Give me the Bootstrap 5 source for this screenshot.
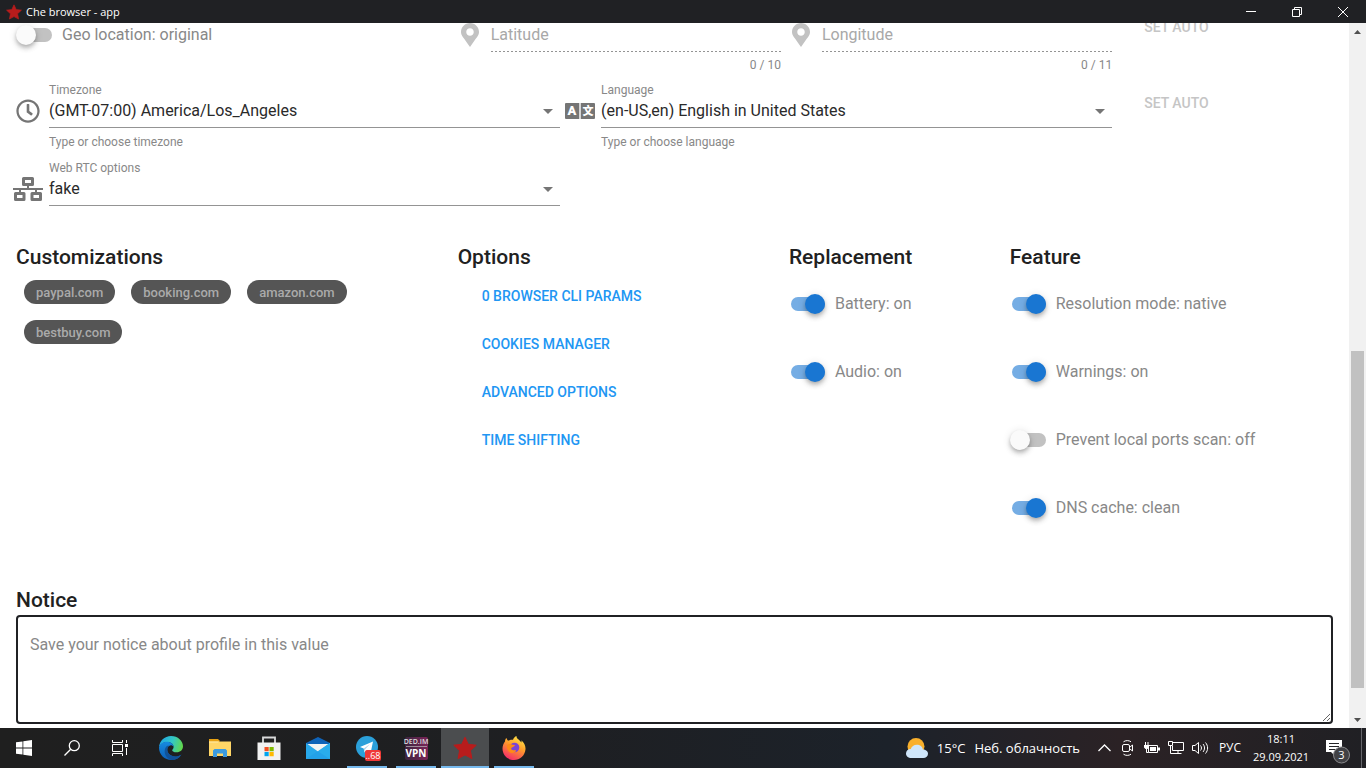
<!DOCTYPE html>
<html lang="en">
<head>
    <meta charset="UTF-8">
    <meta name="viewport" content="width=device-width, initial-scale=1.0">
    <title>Che browser - app</title>
    <link href="https://cdn.jsdelivr.net/npm/bootstrap@5.3.0/dist/css/bootstrap.min.css" rel="stylesheet">
    <style>
        :root {
            --text: #2a2a2a;
            --heading: #212121;
            --muted: #888;
            --faded: #a8a8a8;
            --blue: #1976d2;
            --link: #2196f3;
        }

        body {
            font-family: Roboto, "Liberation Sans", sans-serif;
            font-size: 16px;
            line-height: 24px;
            color: var(--text);
            background: #fff;
        }

        /* window title bar */
        .titlebar {
            height: 23px;
            padding-left: 6px;
            background: #202124;
            color: #fff;
            font: 11px/22px "Open Sans", "Noto Sans", sans-serif;
        }
        .titlebar .win-btn {
            width: 46px;
            height: 23px;
        }
        .plain-btn {
            border: 0;
            padding: 0;
            background: none;
            color: inherit;
            display: flex;
            align-items: center;
            justify-content: center;
        }
        svg { display: block; flex: none; overflow: visible; }

        /* page is scrolled a little past the first row */
        .profile-form { margin-top: -16px; }

        .field-row { margin-bottom: 12px; }
        .field-row.first { margin-bottom: 11px; }
        .field-icon {
            width: 24px;
            height: 24px;
            margin: 16px 9px 0 0;
            color: #757575;
        }
        .field-icon.off { color: #c2c2c2; }
        .field-label {
            display: block;
            height: 14px;
            font-size: 12px;
            line-height: 14px;
            color: var(--muted);
        }
        .field-line {
            height: 31px;
            border-bottom: 1px solid #949494;
        }
        .field-line.dotted {
            border-bottom: 0;
            background: repeating-linear-gradient(90deg, #949494 0 2px, transparent 2px 4px) bottom / 100% 1px no-repeat;
        }
        .field-line select,
        .field-line input {
            flex: 1 1 auto;
            min-width: 0;
            height: 28px;
            border: 0;
            padding: 0;
            background: none;
            color: var(--text);
            appearance: none;
            outline: 0;
        }
        .field-line input { height: 26px; }
        .field-line input::placeholder { color: var(--faded); opacity: 1; }
        .field-hint, .field-count {
            font-size: 12px;
            line-height: 14px;
            color: var(--muted);
        }
        .field-hint { margin-top: 7px; }
        .field-count { margin-top: 6px; text-align: right; }

        .text-btn {
            height: 36px;
            padding: 0 16px;
            margin: 6px 8px;
            border: 0;
            background: none;
            font-size: 14px;
            font-weight: 500;
            color: var(--link);
            text-align: left;
        }
        .text-btn:disabled { color: #c5c5c5; margin-top: 2px; }

        .section-title {
            margin: 0;
            font-size: 21px;
            font-weight: 500;
            line-height: 30px;
            color: var(--heading);
        }
        .customs { margin-top: 36px; }
        .chip {
            height: 24px;
            margin: 8px;
            padding: 0 12px;
            border: 0;
            border-radius: 12px;
            background: #555;
            color: #aaa;
            font-size: 13px;
            font-weight: 500;
            line-height: 25px;
        }

        /* switches */
        .switch-row {
            display: flex;
            align-items: center;
            height: 68px;
            padding-bottom: 4px;
            color: var(--muted);
        }
        .switch-row.first { height: 60px; }
        .switch-input {
            appearance: none;
            display: flex;
            align-items: center;
            width: 34px;
            height: 14px;
            margin: 0 10px 0 2px;
            border-radius: 7px;
            background: #c2c2c2;
        }
        .switch-input::before {
            content: "";
            flex: none;
            width: 20px;
            height: 20px;
            margin-left: -2px;
            border-radius: 50%;
            background: #fafafa;
            box-shadow: 0 2px 4px -1px rgba(0, 0, 0, .2), 0 4px 5px rgba(0, 0, 0, .14), 0 1px 8px rgba(0, 0, 0, .12);
        }
        .switch-input:checked { background: #75ade4; }
        .switch-input:checked::before { margin-left: 14px; background: var(--blue); }

        .notice { margin-top: 41px; }
        .notice textarea {
            display: block;
            width: 100%;
            height: 109px;
            padding: 16px 12px;
            border: 2px solid #202124;
            border-radius: 4px;
            outline: 0;
        }
        .notice textarea::placeholder { color: var(--muted); opacity: 1; }

        .scrollbar { width: 17px; background: #f1f1f1; }
        .scrollbar .plain-btn { height: 17px; width: 17px; }
        .scrollbar .thumb { width: 13px; background: #c1c1c1; flex: 337 1 0; }
        .scrollbar .before { flex: 311 1 0; }
        .scrollbar .after { flex: 23 1 0; }

        /* taskbar */
        .taskbar {
            height: 40px;
            background: linear-gradient(90deg, #1f1f1f, #1e1f22 40%, #1c222a 65%, #2b2225 82%, #202024);
            color: #fff;
            font: 12px/18px "Open Sans", "Noto Sans", sans-serif;
        }
        .task { width: 48px; height: 40px; }
        .apps { gap: 1px; margin-left: 3px; }
        .running {
            border-bottom: 2px solid #76b9ed;
            width: 40px;
            margin: 0 4px;
            padding-top: 2px;
        }
        .running.current { width: 48px; margin: 0; background: #4b4d4f; }
        .tray { width: 24px; height: 40px; }
        .weather { gap: 9px; padding-right: 12px; font-size: 13px; }
        .lang { width: 36px; height: 40px; }
        .clock { width: 66px; font-size: 11px; }
        .notes {
            width: 48px;
            height: 40px;
            padding-top: 6px;
            border-right: 1px solid #65656a;
            margin-right: 4px;
        }
    </style>
</head>
<body class="vh-100 d-flex flex-column overflow-hidden">
    <svg width="0" height="0" class="position-absolute" aria-hidden="true">
        <defs>
            <symbol id="star" viewBox="0 0 24 24">
                <path d="M12 1.200l3.300 7.100 7.900 .9-5.800 5.500 1.500 7.900L12 18.900l-6.900 3.700 1.500-7.900L.8 9.200l7.900-.9z" fill="#b71c1c" stroke="#b71c1c" stroke-linejoin="round"/>
            </symbol>
            <symbol id="pin" viewBox="0 0 384 512">
                <path fill="currentColor" d="M192 512C50 300 0 269 0 192 0 86 86 0 192 0s192 86 192 192c0 77-50 108-192 320zm0-240c44 0 80-36 80-80s-36-80-80-80-80 36-80 80 36 80 80 80z"/>
            </symbol>
            <symbol id="caret" viewBox="0 0 24 24">
                <path d="M7 10l5 5 5-5z" fill="#757575"/>
            </symbol>
        </defs>
    </svg>

    <header class="titlebar d-flex flex-shrink-0 align-items-center">
        <svg width="16" height="16"><use href="#star"/></svg>
        <span class="ps-1">Che browser - app</span>
        <div class="d-flex ms-auto">
            <button class="plain-btn win-btn" aria-label="Minimize">
                <svg width="10" height="10"><path d="M0 4.500h10" stroke="#fff"/></svg>
            </button>
            <button class="plain-btn win-btn" aria-label="Restore">
                <svg width="10" height="10"><path d="M.5 2.500h7v7h-7zM2.500 2.500v-2h7v7h-2" fill="none" stroke="#fff"/></svg>
            </button>
            <button class="plain-btn win-btn" aria-label="Close">
                <svg width="10" height="10"><path d="M0 0l10 10M10 0L0 10" stroke="#fff"/></svg>
            </button>
        </div>
    </header>

    <main class="d-flex flex-grow-1 overflow-hidden">
        <form class="profile-form container-fluid px-3">
            <div class="row gx-2 field-row first">
                <div class="col-4">
                    <div class="switch-row first">
                        <input class="switch-input" type="checkbox" role="switch" id="geo">
                        <label for="geo">Geo location: original</label>
                    </div>
                </div>
                <div class="col-3 d-flex">
                    <div class="field-icon off d-flex justify-content-center"><svg width="18" height="24"><use href="#pin"/></svg></div>
                    <div class="flex-grow-1">
                        <span class="field-label"></span>
                        <div class="field-line dotted d-flex"><input type="text" placeholder="Latitude" aria-label="Latitude" disabled></div>
                        <div class="field-count">0 / 10</div>
                    </div>
                </div>
                <div class="col-3 d-flex">
                    <div class="field-icon off d-flex justify-content-center"><svg width="18" height="24"><use href="#pin"/></svg></div>
                    <div class="flex-grow-1">
                        <span class="field-label"></span>
                        <div class="field-line dotted d-flex"><input type="text" placeholder="Longitude" aria-label="Longitude" disabled></div>
                        <div class="field-count">0 / 11</div>
                    </div>
                </div>
                <div class="col-2"><button type="button" class="text-btn" disabled>SET AUTO</button></div>
            </div>

            <div class="row gx-2 field-row">
                <div class="col-5 d-flex">
                    <div class="field-icon">
                        <svg width="24" height="24" viewBox="0 0 512 512"><path fill="currentColor" d="M256 8C119 8 8 119 8 256s111 248 248 248 248-111 248-248S393 8 256 8zm0 448c-110 0-200-90-200-200S146 56 256 56s200 90 200 200-90 200-200 200zm62-104l-85-62c-3-2-5-6-5-10V116c0-7 5-12 12-12h32c7 0 12 5 12 12v142l67 48c5 4 6 12 2 17l-18 26c-4 5-12 6-17 3z"/></svg>
                    </div>
                    <div class="flex-grow-1">
                        <label class="field-label" for="timezone">Timezone</label>
                        <div class="field-line d-flex align-items-start">
                            <select id="timezone"><option>(GMT-07:00) America/Los_Angeles</option></select>
                            <svg width="24" height="28"><use href="#caret"/></svg>
                        </div>
                        <div class="field-hint">Type or choose timezone</div>
                    </div>
                </div>
                <div class="col-5 d-flex">
                    <div class="field-icon d-flex justify-content-center">
                        <svg width="30" height="24" viewBox="0 0 30 24">
                            <path d="M1 4h13.300v16H1a1 1 0 0 1-1-1V5a1 1 0 0 1 1-1zM15.700 4H29a1 1 0 0 1 1 1v14a1 1 0 0 1-1 1H15.700z" fill="currentColor"/>
                            <text x="7" y="16" text-anchor="middle" font-family="Roboto" font-size="13" font-weight="900" fill="#fff">A</text>
                            <text x="23" y="16" text-anchor="middle" font-family="Noto Sans CJK SC" font-size="11" font-weight="900" fill="#fff">文</text>
                        </svg>
                    </div>
                    <div class="flex-grow-1">
                        <label class="field-label" for="language">Language</label>
                        <div class="field-line d-flex align-items-start">
                            <select id="language"><option>(en-US,en) English in United States</option></select>
                            <svg width="24" height="28"><use href="#caret"/></svg>
                        </div>
                        <div class="field-hint">Type or choose language</div>
                    </div>
                </div>
                <div class="col-2"><button type="button" class="text-btn" disabled>SET AUTO</button></div>
            </div>

            <div class="row gx-2">
                <div class="col-5 d-flex">
                    <div class="field-icon d-flex justify-content-center">
                        <svg width="30" height="24" viewBox="0 0 30 24">
                            <path d="M10.500 1.500h9v6h-9zM2.500 16.500h8.500v6H2.500zM19 16.500h8.500v6H19z" fill="none" stroke="currentColor" stroke-width="3" stroke-linejoin="round"/>
                            <path d="M0 12h30M15 8v4M7 12v4M23 12v4" stroke="currentColor" stroke-width="2"/>
                        </svg>
                    </div>
                    <div class="flex-grow-1">
                        <label class="field-label" for="webrtc">Web RTC options</label>
                        <div class="field-line d-flex align-items-start">
                            <select id="webrtc"><option>fake</option></select>
                            <svg width="24" height="28"><use href="#caret"/></svg>
                        </div>
                    </div>
                </div>
            </div>

            <div class="row gx-2 customs">
                <section class="col-4">
                    <h2 class="section-title">Customizations</h2>
                    <div class="d-flex flex-wrap">
                        <button type="button" class="chip">paypal.com</button>
                        <button type="button" class="chip">booking.com</button>
                        <button type="button" class="chip">amazon.com</button>
                        <button type="button" class="chip">bestbuy.com</button>
                    </div>
                </section>
                <section class="col-3">
                    <h2 class="section-title">Options</h2>
                    <div class="d-flex flex-column align-items-start">
                        <button type="button" class="text-btn">0 BROWSER CLI PARAMS</button>
                        <button type="button" class="text-btn">COOKIES MANAGER</button>
                        <button type="button" class="text-btn">ADVANCED OPTIONS</button>
                        <button type="button" class="text-btn">TIME SHIFTING</button>
                    </div>
                </section>
                <section class="col-2">
                    <h2 class="section-title">Replacement</h2>
                    <div class="switch-row">
                        <input class="switch-input" type="checkbox" role="switch" id="battery" checked>
                        <label for="battery">Battery: on</label>
                    </div>
                    <div class="switch-row">
                        <input class="switch-input" type="checkbox" role="switch" id="audio" checked>
                        <label for="audio">Audio: on</label>
                    </div>
                </section>
                <section class="col-3">
                    <h2 class="section-title">Feature</h2>
                    <div class="switch-row">
                        <input class="switch-input" type="checkbox" role="switch" id="resolution" checked>
                        <label for="resolution">Resolution mode: native</label>
                    </div>
                    <div class="switch-row">
                        <input class="switch-input" type="checkbox" role="switch" id="warnings" checked>
                        <label for="warnings">Warnings: on</label>
                    </div>
                    <div class="switch-row">
                        <input class="switch-input" type="checkbox" role="switch" id="ports">
                        <label for="ports">Prevent local ports scan: off</label>
                    </div>
                    <div class="switch-row">
                        <input class="switch-input" type="checkbox" role="switch" id="dns" checked>
                        <label for="dns">DNS cache: clean</label>
                    </div>
                </section>
            </div>

            <div class="notice">
                <h2 class="section-title"><label for="notice">Notice</label></h2>
                <textarea id="notice" placeholder="Save your notice about profile in this value"></textarea>
            </div>
        </form>

        <div class="scrollbar d-flex flex-column align-items-center flex-shrink-0">
            <button class="plain-btn" aria-label="Scroll up"><svg width="7" height="4"><path d="M0 4l3.500-4L7 4z" fill="#505050"/></svg></button>
            <div class="before"></div>
            <div class="thumb"></div>
            <div class="after"></div>
            <button class="plain-btn" aria-label="Scroll down"><svg width="7" height="4"><path d="M0 0l3.500 4L7 0z" fill="#505050"/></svg></button>
        </div>
    </main>

    <footer class="taskbar d-flex flex-shrink-0 align-items-center">
        <button class="plain-btn task" aria-label="Start">
            <svg width="16" height="16"><path d="M0 2.300l6.500-.9v6.100H0zM7.300 1.300L16 0v7.500H7.300zM0 8.400h6.500v6.200L0 13.700zM7.300 8.400H16V16l-8.700-1.300z" fill="#fff"/></svg>
        </button>
        <button class="plain-btn task" aria-label="Search">
            <svg width="16" height="16" fill="none" stroke="#fff" stroke-width="1.300"><circle cx="10.300" cy="5.700" r="5"/><path d="M6.700 9.300L.5 15.500"/></svg>
        </button>
        <button class="plain-btn task" aria-label="Task view">
            <svg width="16" height="16" fill="none" stroke="#fff"><path d="M.5 0v2.500h10V0M.5 16v-2.500h10V16M.5 4.500h10v7H.5zM14.500 0v3M14.500 8v7"/><path d="M13 4h3v3h-3z" fill="#fff" stroke="none"/></svg>
        </button>
        <div class="d-flex apps">
            <button class="plain-btn task" aria-label="Edge">
                <svg width="24" height="24" viewBox="0 0 24 24">
                    <defs>
                        <linearGradient id="e1" x1="0" y1=".3" x2="1" y2=".5"><stop stop-color="#1fa5e8"/><stop offset=".55" stop-color="#34c8c4"/><stop offset="1" stop-color="#62d84c"/></linearGradient>
                        <linearGradient id="e2" x1="0" y1="0" x2="0" y2="1"><stop stop-color="#168be0"/><stop offset="1" stop-color="#0d5fb8"/></linearGradient>
                    </defs>
                    <path d="M0 11.500C.3 5 5.500 0 12 0c7 0 12 5 12 10.300 0 3.700-2.800 6-6.300 6-3.400 0-4.500-1.300-4.500-2.100s1.400-1.400 1.400-3.300C14.600 8 11.600 6 8.200 6 4 6 1 8.500 0 11.500z" fill="url(#e1)"/>
                    <path d="M0 11.500C1 8 4 5.800 8 5.800c3.700 0 6.400 2.200 6.600 5-.8-1-2-1.600-3.200-1.400-2.500.4-3.600 3.200-2.800 5.900 1 3.500 4.600 5.500 8.600 5.100 2.200-.2 4-1.100 5.200-2-2 3.700-5.800 5.600-9.900 5.600C5.400 24 0 18.700 0 11.500z" fill="url(#e2)"/>
                    <path d="M8.200 9.800c-1.900 1.400-3 4-2.400 7.100.7 3.600 3.300 6.300 6.700 7 4.200 0 7.900-2 9.900-5.500-1.200.9-3 1.800-5.200 2-4 .4-7.600-1.600-8.600-5.100-.6-2.200 0-4.500 1.700-5.500z" fill="#114a8b" opacity=".75"/>
                </svg>
            </button>
            <button class="plain-btn task" aria-label="File Explorer">
                <svg width="22" height="18" viewBox="0 0 22 18">
                    <path d="M0 0h9l1.500 1.500V4H0z" fill="#e8a213"/><path d="M0 2.500h22V17H0z" fill="#ffd667"/><path d="M0 2.500h10l-1 1H0z" fill="#ffe9a8"/>
                    <path d="M4 18v-6.500L5.500 10h11l1.500 1.500V18h-4v-3.500H8V18z" fill="#3c9be0"/>
                </svg>
            </button>
            <button class="plain-btn task" aria-label="Microsoft Store">
                <svg width="24" height="24" viewBox="0 0 24 24">
                    <path d="M6 7V1.500h12V7" fill="none" stroke="#d9dadb" stroke-width="1.800"/><path d="M.5 6.500h23V24H.5z" fill="#f2f2f2"/>
                    <path d="M7.500 11h4.200v4.200H7.500z" fill="#f25022"/><path d="M12.500 11h4.200v4.200h-4.200z" fill="#7fba00"/><path d="M7.500 16h4.200v4.200H7.500z" fill="#00a4ef"/><path d="M12.500 16h4.200v4.200h-4.200z" fill="#ffb900"/>
                </svg>
            </button>
            <button class="plain-btn task" aria-label="Mail">
                <svg width="24" height="22" viewBox="0 0 24 22">
                    <path d="M0 6l12-6 12 6v5H0z" fill="#0f63b8"/><path d="M1 7h22L12 16z" fill="#f3f3f3"/>
                    <path d="M0 6l12 8.500L24 6v16H0z" fill="#28a8ea"/><path d="M12 14.500L24 6v16z" fill="#35c1f1"/><path d="M0 22L24 6v16z" fill="#1f9be6" opacity=".55"/>
                </svg>
            </button>
            <button class="plain-btn task running" aria-label="Telegram">
                <svg width="22" height="24" viewBox="0 0 22 24">
                    <circle cx="11" cy="11" r="11" fill="#2ba0da"/><path d="M4 11l13-5.500-2.500 12-4-3-2 2-.8-4z" fill="#fff"/><path d="M7.800 12.500L14 8l-5 5.500-.4 3z" fill="#b3d5ea"/>
                    <rect x="9" y="14" width="16" height="11" rx="2" fill="#ef3838"/>
                    <text x="17" y="23" text-anchor="middle" font-family="Open Sans" font-size="9" fill="#fff">..68</text>
                </svg>
            </button>
            <button class="plain-btn task running" aria-label="DED.IM VPN">
                <svg width="23" height="23" viewBox="0 0 23 23">
                    <defs><linearGradient id="v1" x1="0" y1="0" x2="1" y2="0"><stop stop-color="#3b2440"/><stop offset="1" stop-color="#7b2458"/></linearGradient></defs>
                    <rect width="23" height="23" rx="2" fill="url(#v1)"/>
                    <text x="11" y="7" text-anchor="middle" font-family="Open Sans" font-size="7" font-weight="600" fill="#ddd">DED.IM</text>
                    <path d="M1 9.500h21" stroke="#bbb" stroke-width=".7"/>
                    <text x="11" y="20" text-anchor="middle" font-family="Open Sans" font-size="10" font-weight="700" fill="#fff">VPN</text>
                </svg>
            </button>
            <button class="plain-btn task running current" aria-label="Che browser">
                <svg width="24" height="24"><use href="#star"/></svg>
            </button>
            <button class="plain-btn task running" aria-label="Firefox">
                <svg width="24" height="24" viewBox="0 0 24 24">
                    <defs><linearGradient id="f1" x1=".8" y1="0" x2=".3" y2="1"><stop stop-color="#fff04a"/><stop offset=".45" stop-color="#ff9a2b"/><stop offset="1" stop-color="#f5296a"/></linearGradient></defs>
                    <path d="M3 5.500C3 4 3.600 2.600 4.500 2c.2 1.300.9 2 1.700 2.700C7.500 4 9.500 3.400 11 3.800 11.500 2 13 .5 14.500 0c-.2 2 1.200 3 2.900 4.300l2 2.200c.3-.8.100-1.700-.2-2.300 2.900 2.100 4.500 5.500 4.300 9C23 19.500 18 24 12 24 5.500 24 .5 19 .5 12.500.5 10 1.500 7.500 3 5.500z" fill="url(#f1)"/>
                    <circle cx="12.500" cy="11.500" r="4.800" fill="#7a44d6"/>
                    <path d="M5 9c1.500-1.500 4-1.300 5.500-.3l2.500.4c-.4 1.400-1.700 2-3 2.300-.7.200-1.200 1.300-.5 2.200 1.200 1.400 3 .2 4.800 1-1.200 2.800-5 3.300-7.300 1.200C5.500 14.200 4.500 11.500 5 9z" fill="#ff8a16"/>
                </svg>
            </button>
        </div>

        <div class="d-flex align-items-center ms-auto">
            <button class="plain-btn weather">
                <svg width="22" height="20" viewBox="0 0 22 20">
                    <circle cx="10" cy="8.500" r="8.500" fill="#f9b02c"/>
                    <path d="M5.500 20C2 20 0 18 0 15.500S2 11 4.800 11C5.500 8.500 8 6.800 10.800 6.800c3.200 0 5.700 2 6.100 4.800 2.800 0 5.100 1.700 5.100 4.200S20 20 17.300 20z" fill="#cfe6fa"/>
                </svg>
                <span>15°C</span>
                <span>Неб. облачность</span>
            </button>
            <button class="plain-btn tray" aria-label="Show hidden icons">
                <svg width="13" height="8"><path d="M.5 7L6.500 1l6 6" fill="none" stroke="#fff" stroke-width="1.300"/></svg>
            </button>
            <button class="plain-btn tray" aria-label="Meet now">
                <svg width="12" height="16" fill="none" stroke="#fff"><rect x=".5" y="4.500" width="7" height="7" rx="1.500"/><path d="M8 7l2.500-2v6L8 9M1.500 1.800C3.500 .2 7 .2 9 1.800M1.500 14.200c2 1.600 5.500 1.600 7.500 0"/></svg>
            </button>
            <button class="plain-btn tray" aria-label="Battery">
                <svg width="16" height="12"><path d="M4.500 3.500h9v7h-9z" fill="none" stroke="#fff"/><path d="M6 5h6v4H6zM14 5.500h2v3h-2zM0 3h5v2.500L3.500 7h-2L0 5.500zM1 0h1v3H1zM3.500 0h1v3h-1z" fill="#fff"/><path d="M2.500 7v3.500h2" fill="none" stroke="#fff"/></svg>
            </button>
            <button class="plain-btn tray" aria-label="Network">
                <svg width="16" height="14" fill="none" stroke="#fff"><path d="M5 1.500h10.500v8h-11V5M.5.500h4v4h-4zM2.500 4.500v8h7M10 9.500v3M6.500 12.500h7"/></svg>
            </button>
            <button class="plain-btn tray" aria-label="Volume">
                <svg width="17" height="14" fill="none" stroke="#fff"><path d="M.5 4.500h2.500l3.500-3v11l-3.500-3H.5zM8.500 4.500c1.300 1.500 1.300 3.500 0 5M11 3c2 2.400 2 5.600 0 8M13.500 1.500c2.800 3.300 2.800 7.700 0 11"/></svg>
            </button>
            <button class="plain-btn lang">РУС</button>
            <div class="clock text-center">
                <div>18:11</div>
                <div>29.09.2021</div>
            </div>
            <button class="plain-btn notes" aria-label="Notifications">
                <svg width="24" height="24" viewBox="0 0 24 24">
                    <path d="M0 1h16v12H9v4l-4-4H0z" fill="#fff"/><path d="M3 4.500h10M3 7.500h10M3 10.500h6" stroke="#252528"/>
                    <circle cx="15.500" cy="16" r="8" fill="#414145" stroke="#8b8b8e"/>
                    <text x="15.500" y="20" text-anchor="middle" font-family="Open Sans" font-size="11" fill="#fff">3</text>
                </svg>
            </button>
        </div>
    </footer>
    <script src="https://cdn.jsdelivr.net/npm/bootstrap@5.3.0/dist/js/bootstrap.bundle.min.js"></script>
</body>
</html>
